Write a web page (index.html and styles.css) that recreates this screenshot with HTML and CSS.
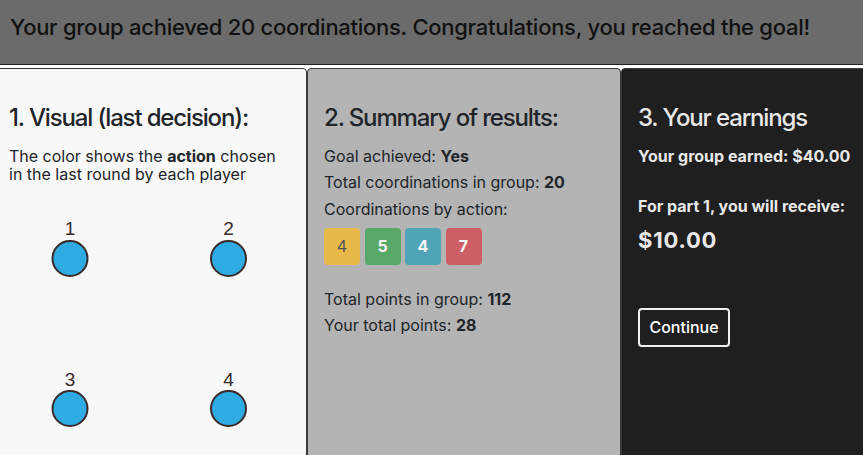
FILE: index.html
```html
<!DOCTYPE html>
<html lang="en">
<head>
<meta charset="utf-8">
<title>Results</title>
<link rel="stylesheet" href="styles.css">
</head>
<body>
<header class="banner">Your group achieved 20 coordinations. Congratulations, you reached the goal!</header>
<main class="deck">
  <section class="card card-light">
    <h2 class="card-title">1. Visual (last decision):</h2>
    <p class="text">The color shows the <b>action</b> chosen in the last round by each player</p>
    <svg class="players" width="281" height="250" viewBox="0 0 281 250">
      <g class="player">
        <text x="61" y="41" text-anchor="middle">1</text>
        <circle cx="61" cy="64.5" r="17.5"/>
      </g>
      <g class="player">
        <text x="219.5" y="41" text-anchor="middle">2</text>
        <circle cx="219.5" cy="64.5" r="17.5"/>
      </g>
      <g class="player">
        <text x="61" y="191.5" text-anchor="middle">3</text>
        <circle cx="61" cy="214.5" r="17.5"/>
      </g>
      <g class="player">
        <text x="219.5" y="191.5" text-anchor="middle">4</text>
        <circle cx="219.5" cy="214.5" r="17.5"/>
      </g>
    </svg>
  </section>
  <section class="card card-gray">
    <h2 class="card-title">2. Summary of results:</h2>
    <div class="line">Goal achieved: <b>Yes</b></div>
    <div class="line">Total coordinations in group: <b>20</b></div>
    <div class="line">Coordinations by action:</div>
    <div class="badges">
      <span class="badge badge-yellow">4</span>
      <span class="badge badge-green">5</span>
      <span class="badge badge-teal">4</span>
      <span class="badge badge-red">7</span>
    </div>
    <div class="line">Total points in group: <b>112</b></div>
    <div class="line">Your total points: <b>28</b></div>
  </section>
  <section class="card card-dark">
    <h2 class="card-title">3. Your earnings</h2>
    <div class="line"><b>Your group earned: $40.00</b></div>
    <div class="line line-gap"><b>For part 1, you will receive:</b></div>
    <div class="amount">$10.00</div>
    <button class="btn" type="button">Continue</button>
  </section>
</main>
</body>
</html>
```
FILE: styles.css
```css
html, body {
  margin: 0;
  padding: 0;
  background: #ffffff;
  overflow: hidden;
}
body {
  font-family: Inter, "Liberation Sans", Arial, sans-serif;
  color: #212529;
  width: 863px;
  height: 455px;
}
.banner {
  display: block;
  height: 65px;
  box-sizing: border-box;
  background: #6b6b6b;
  border-bottom: 1px solid #222222;
  padding: 13px 0 0 10px;
  font-size: 22px;
  line-height: 28px;
  font-weight: 500;
  letter-spacing: -0.27px;
  color: #111111;
  white-space: nowrap;
}
.deck {
  display: flex;
  margin: 3px 0 0 -8px;
}
.card {
  flex: 0 0 314px;
  box-sizing: border-box;
  height: 420px;
  border: 1px solid #343a40;
  border-radius: 4px;
  padding: 34px 16px 0 16px;
}
.card-light { background: #f8f8f8; }
.card-gray { background: #b4b4b4; }
.card-dark { background: #1f1f1f; color: #e8e8e8; }
.card-title {
  margin: 0 0 14.5px 0;
  font-size: 24px;
  line-height: 29px;
  font-weight: 500;
  letter-spacing: -1.15px;
}
.text {
  margin: 0;
  font-size: 16px;
  line-height: 18.5px;
}
.players {
  display: block;
  margin-top: 10px;
}
.player text {
  font-family: "Liberation Sans", Arial, sans-serif;
  font-size: 19px;
  fill: #3a2a2a;
}
.player circle {
  fill: #2eabe2;
  stroke: #3a2a2a;
  stroke-width: 2;
}
.line {
  font-size: 16px;
  line-height: 19px;
  margin-bottom: 7.5px;
}
.badges {
  display: flex;
  gap: 4.5px;
  margin: 9px 0 25px 0;
}
.badge {
  width: 36px;
  height: 37px;
  border-radius: 4px;
  display: flex;
  align-items: center;
  justify-content: center;
  font-size: 16px;
  font-weight: bold;
  color: #f4f4f4;
}
.badge-yellow { background: #e6b94a; color: #555555; font-weight: normal; }
.badge-green { background: #58a868; }
.badge-teal { background: #4fa4b6; }
.badge-red { background: #ce5e66; }
.line-gap { margin-top: 31px; }
.amount {
  font-size: 22px;
  font-weight: bold;
  line-height: 26px;
  letter-spacing: 0.8px;
  margin-top: 11px;
}
.btn {
  margin-top: 55px;
  display: block;
  width: 92px;
  height: 39px;
  background: transparent;
  border: 2px solid #f0f0f0;
  border-radius: 4px;
  color: #ffffff;
  font-family: Inter, "Liberation Sans", Arial, sans-serif;
  font-size: 16px;
  font-weight: 500;
  padding: 0;
}
```
